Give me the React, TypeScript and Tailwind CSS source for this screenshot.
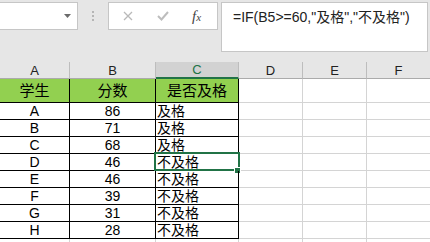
import React from "react";

const widths = [70, 86, 83, 64, 64, 64];
const letters = ["A", "B", "C", "D", "E", "F"];
const data: [string, string, string][] = [
  ["A", "86", "及格"],
  ["B", "71", "及格"],
  ["C", "68", "及格"],
  ["D", "46", "不及格"],
  ["E", "46", "不及格"],
  ["F", "39", "不及格"],
  ["G", "31", "不及格"],
  ["H", "28", "不及格"],
];

const font = { fontFamily: '"Liberation Sans", "Noto Sans CJK SC", Arial, sans-serif' };

export default function App() {
  return (
    <div
      className="w-[430px] h-[242px] overflow-hidden bg-[#e6e6e6] flex flex-col"
      style={font}
    >
      {/* Formula bar area */}
      <div className="h-[62px] shrink-0 flex items-start pt-[2px]">
        <div className="w-[78px] h-[28px] bg-white border border-l-0 border-[#c6c6c6] flex items-center justify-end pr-[6px]">
          <svg width="7" height="4" viewBox="0 0 7 4">
            <path d="M0 0 H7 L3.5 4 Z" fill="#6b6b6b" />
          </svg>
        </div>
        <div className="w-[30px] h-[28px] flex flex-col items-center justify-center gap-[2px]">
          <div className="w-[2px] h-[2px] bg-[#b5b5b5]" />
          <div className="w-[2px] h-[2px] bg-[#b5b5b5]" />
          <div className="w-[2px] h-[2px] bg-[#b5b5b5]" />
        </div>
        <div className="w-[110px] h-[28px] bg-white border border-[#c6c6c6] flex items-center">
          <svg className="ml-[14px]" width="10" height="10" viewBox="0 0 10 10">
            <path d="M1 1 L9 9 M9 1 L1 9" stroke="#b9b9b9" strokeWidth="1.3" />
          </svg>
          <svg className="ml-[24px]" width="12" height="10" viewBox="0 0 12 10">
            <path d="M1 5 L4.5 8.5 L11 1" stroke="#bdbdbd" strokeWidth="2" fill="none" />
          </svg>
          <span
            className="ml-[23px] text-[15px] italic text-[#444] leading-none"
            style={{ fontFamily: '"Liberation Serif", "DejaVu Serif", serif' }}
          >
            f<span className="text-[11px]">x</span>
          </span>
        </div>
        <div className="w-[3px]" />
        <div className="w-[207px] h-[50px] bg-white border border-[#c6c6c6] pl-[11px] pt-[5px] text-[14px] leading-[18px] text-[#222] whitespace-nowrap">
          =IF(B5&gt;=60,"及格","不及格")
        </div>
      </div>

      {/* Column headers */}
      <div className="h-[17px] shrink-0 flex">
        {letters.map((l, i) => {
          const sel = l === "C";
          return (
            <div
              key={l}
              style={{ width: widths[i] }}
              className={
                sel
                  ? "shrink-0 h-full bg-[#d2d2d2] border-r border-r-[#bdbdbd] border-b-2 border-b-[#217346] text-[#217346] text-[13px] flex items-center justify-center leading-none"
                  : "shrink-0 h-full border-r border-r-[#bdbdbd] border-b border-b-[#ababab] text-[#222] text-[13px] flex items-center justify-center leading-none"
              }
            >
              {l}
            </div>
          );
        })}
      </div>

      {/* Header data row */}
      <div className="h-[24px] shrink-0 flex bg-white">
        {["学生", "分数", "是否及格"].map((t, i) => (
          <div
            key={t}
            style={{ width: widths[i] }}
            className="shrink-0 h-full bg-[#92d050] border-r border-b border-black text-[15px] text-black flex items-center justify-center leading-none"
          >
            {t}
          </div>
        ))}
        {[3, 4, 5].map((i) => (
          <div
            key={i}
            style={{ width: widths[i] }}
            className="shrink-0 h-full border-r border-b border-[#d4d4d4]"
          />
        ))}
      </div>

      {/* Data rows */}
      {data.map((r, ri) => (
        <div key={ri} className="h-[17px] shrink-0 flex bg-white">
          <div
            style={{ width: widths[0] }}
            className="shrink-0 h-full border-r border-b border-black text-[14px] text-black flex items-center justify-center leading-none"
          >
            {r[0]}
          </div>
          <div
            style={{ width: widths[1] }}
            className="shrink-0 h-full border-r border-b border-black text-[14px] text-black flex items-center justify-center leading-none"
          >
            {r[1]}
          </div>
          <div
            style={{ width: widths[2] }}
            className="relative shrink-0 h-full border-r border-b border-black text-[14px] text-black flex items-center pl-[1px] leading-none"
          >
            {r[2]}
            {ri === 3 && (
              <>
                <div className="absolute left-[-2px] top-[-2px] right-[-2px] bottom-[-1px] border-2 border-[#217346]" />
                <div className="absolute right-[-3px] bottom-[-4px] w-[7px] h-[7px] bg-[#217346] border border-white" />
              </>
            )}
          </div>
          {[3, 4, 5].map((i) => (
            <div
              key={i}
              style={{ width: widths[i] }}
              className="shrink-0 h-full border-r border-b border-[#d4d4d4]"
            />
          ))}
        </div>
      ))}

      {/* Partial row */}
      <div className="flex-1 flex bg-white">
        {widths.map((w, i) => (
          <div
            key={i}
            style={{ width: w }}
            className="shrink-0 h-full border-r border-[#d4d4d4]"
          />
        ))}
      </div>
    </div>
  );
}
